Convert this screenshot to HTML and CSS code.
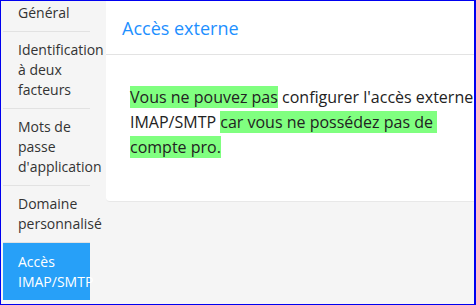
FILE: index.html
```html
<!DOCTYPE html>
<html lang="fr">
<head>
<meta charset="utf-8">
<title>Accès externe</title>
<link rel="stylesheet" href="styles.css">
</head>
<body>
<div class="frame">
  <nav class="sidebar">
    <ul class="menu">
      <li class="item">Général</li>
      <li class="item">Identification à deux facteurs</li>
      <li class="item">Mots de passe d'application</li>
      <li class="item">Domaine personnalisé</li>
      <li class="item active">Accès IMAP/SMTP</li>
    </ul>
  </nav>
  <main class="main">
    <section class="card">
      <header class="card-head">
        <h1 class="title">Accès externe</h1>
      </header>
      <div class="card-body">
        <p class="msg"><span class="hl">Vous ne pouvez pas</span> configurer l'accès externe IMAP/SMTP <span class="hl"> car vous ne possédez pas de&nbsp; compte pro.</span></p>
      </div>
    </section>
  </main>
</div>
</body>
</html>
```
FILE: styles.css
```css
html, body {
  margin: 0;
  padding: 0;
}
body {
  width: 476px;
  height: 305px;
  overflow: hidden;
  font-family: "Open Sans", "Liberation Sans", sans-serif;
}
.frame {
  box-sizing: border-box;
  width: 476px;
  height: 305px;
  border: 1px solid #0000f0;
  border-right-width: 2px;
  background: #f5f5f5;
  display: flex;
  overflow: hidden;
}
.sidebar {
  width: 105px;
  flex: none;
  padding-left: 2px;
  box-sizing: border-box;
}
.menu {
  list-style: none;
  margin: -6px 0 0 0;
  padding: 0;
  width: 87px;
}
.item {
  padding: 8px 0 8px 15px;
  font-size: 14px;
  line-height: 20px;
  color: #333;
  border-bottom: 1px solid #e2e2e2;
}
.item.active {
  background: #27a0f8;
  color: #fff;
  border-bottom: none;
  padding-top: 9px;
}
.main {
  flex: 1;
  min-width: 0;
}
.card {
  background: #fff;
  width: 420px;
  height: 201px;
  box-sizing: border-box;
  border-bottom: 1px solid #e8e8e8;
  border-radius: 0 0 0 4px;
}
.card-head {
  height: 53px;
  border-bottom: 1px solid #e3e3e3;
  display: flex;
  align-items: center;
  padding-left: 16px;
}
.title {
  margin: 0;
  font-size: 18px;
  font-weight: normal;
  color: #1e90ff;
  padding-top: 1px;
}
.card-body {
  padding: 30px 40px 0 24px;
}
.msg {
  margin: 0;
  font-size: 16px;
  line-height: 25px;
  color: #222;
}
.hl {
  background: #80ff80;
}
```
